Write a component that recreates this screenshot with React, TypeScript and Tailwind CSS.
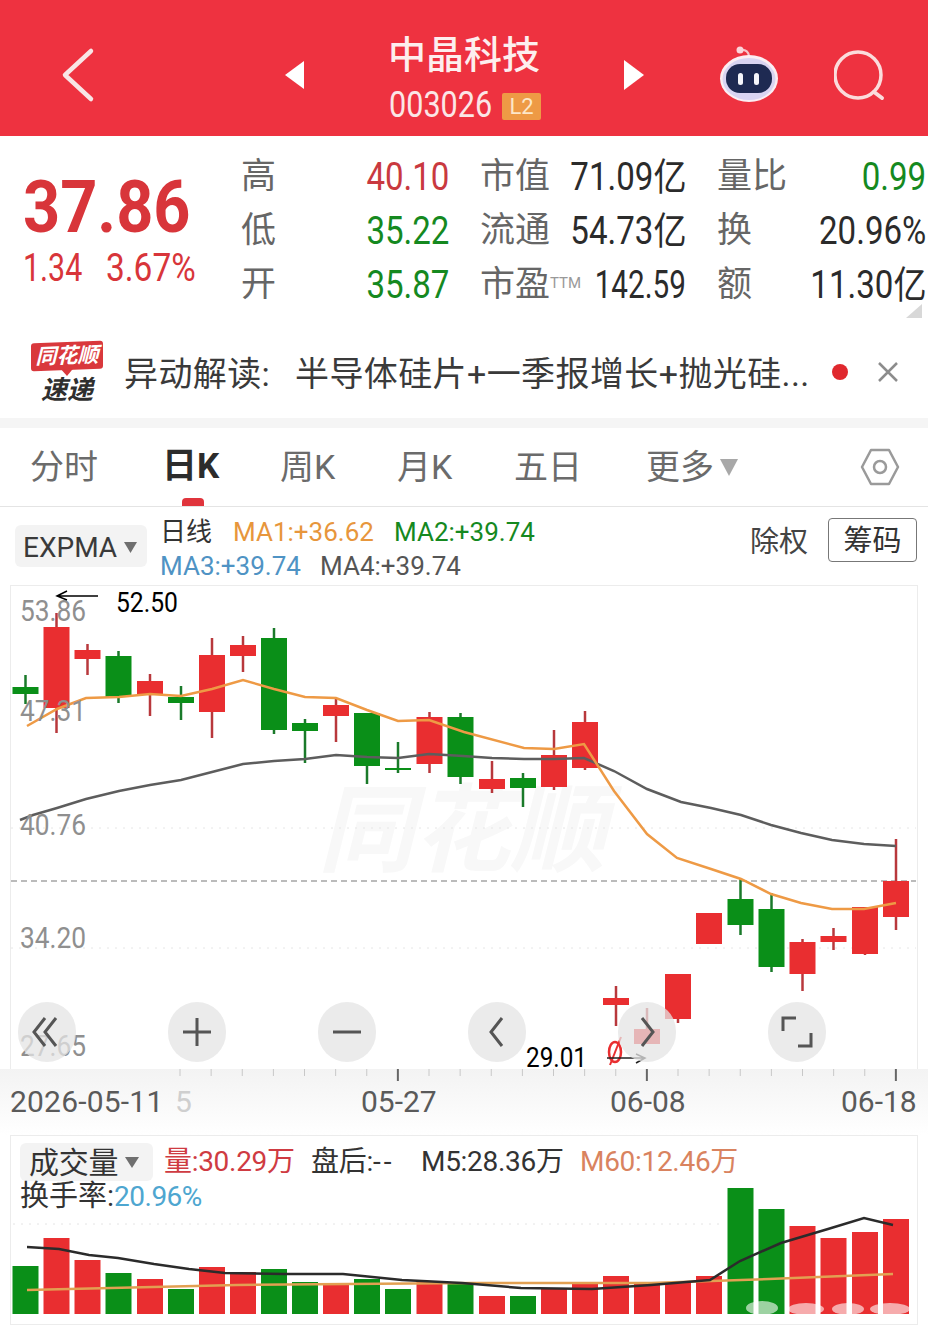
import React from 'react';

const GREEN = '#0a8f18';
const RED = '#e92e30';

// x, bodyTop, bodyBottom, wickTop, wickBottom, up
type Candle = [number, number, number, number, number, boolean];

const candles: Candle[] = [
  [25.5, 686, 693, 674, 703, false],
  [56.5, 626, 707, 612, 732, true],
  [87.5, 649, 658, 643, 674, true],
  [118.5, 655, 696, 650, 702, false],
  [150, 680, 694, 673, 715, true],
  [181, 696, 702, 685, 719, false],
  [212, 654, 711, 637, 737, true],
  [243, 644, 655, 635, 671, true],
  [274, 637, 729, 627, 733, false],
  [305, 722, 730, 718, 762, false],
  [336, 704, 715, 698, 741, true],
  [367, 712, 765, 712, 783, false],
  [398, 767, 769, 741, 772, false],
  [429.5, 716, 763, 711, 772, true],
  [460.5, 716, 776, 712, 783, false],
  [492, 778, 788, 760, 792, true],
  [523, 777, 787, 772, 806, false],
  [554, 754, 786, 729, 789, true],
  [585, 721, 767, 710, 769, true],
  [616, 997, 1004, 985, 1025, true],
  [678, 973, 1018, 973, 1022, true],
  [709, 912, 943, 912, 943, true],
  [740.5, 898, 924, 878, 934, false],
  [771.5, 908, 966, 892, 971, false],
  [802.5, 941, 973, 938, 990, true],
  [833.5, 935, 941, 927, 949, true],
  [865, 906, 953, 906, 954, true],
  [896, 880, 916, 838, 929, true],
];

const orangeLine =
  '27,725 57,708 86,697 119,696 150,693 181,695 212,688 243,679 274,688 305,696 336,697 367,709 398,720 429,719 464,731 524,747 554,748 584,743 614,790 647,833 677,857 711,868 741,878 771,893 801,902 832,908 864,908 896,902';
const grayLine =
  '20,819 33,814 57,807 86,798 119,790 150,784 181,779 212,771 243,763 274,760 305,758 336,754 367,756 398,757 429,753 463,755 492,757 524,758 554,758 584,757 614,770 647,788 681,801 711,807 741,814 771,824 801,832 832,839 864,843 896,845';

// x, top, up
const volumes: [number, number, boolean][] = [
  [25.5, 1265, false],
  [56.5, 1237, true],
  [87.5, 1259, true],
  [118.5, 1272, false],
  [150, 1278, true],
  [181, 1288, false],
  [212, 1266, true],
  [243, 1271, true],
  [274, 1268, false],
  [305, 1281, false],
  [336, 1282, true],
  [367, 1278, false],
  [398, 1288, false],
  [429.5, 1281, true],
  [460.5, 1282, false],
  [492, 1295, true],
  [523, 1295, false],
  [554, 1288, true],
  [585, 1282, true],
  [616, 1275, true],
  [647, 1281, true],
  [678, 1281, true],
  [709, 1275, true],
  [740.5, 1187, false],
  [771.5, 1208, false],
  [802.5, 1225, true],
  [833.5, 1237, true],
  [865, 1231, true],
  [896, 1218, true],
];

const quoteRows = [
  [
    { label: '高', value: '40.10', color: 'text-[#c9393f]' },
    { label: '市值', value: '71.09亿', color: 'text-[#2b2b2b]' },
    { label: '量比', value: '0.99', color: 'text-[#15891f]' },
  ],
  [
    { label: '低', value: '35.22', color: 'text-[#15891f]' },
    { label: '流通', value: '54.73亿', color: 'text-[#2b2b2b]' },
    { label: '换', value: '20.96%', color: 'text-[#2b2b2b]' },
  ],
  [
    { label: '开', value: '35.87', color: 'text-[#15891f]' },
    { label: '市盈', sup: 'TTM', value: '142.59', color: 'text-[#2b2b2b]' },
    { label: '额', value: '11.30亿', color: 'text-[#2b2b2b]' },
  ],
];

const ticks = Array.from({ length: 24 }, (_, i) => i);

const RobotIcon = () => (
  <svg width="62" height="60" viewBox="0 0 62 60">
    <path d="M22 5q8-1 9 6" fill="none" stroke="#f8c4ca" strokeWidth="2" />
    <circle cx="22" cy="5" r="3.500" fill="#fbd5da" />
    <ellipse cx="31" cy="33.500" rx="29" ry="23.500" fill="#fbeef3" />
    <ellipse cx="31" cy="34" rx="26.500" ry="21" fill="#d9d4f2" />
    <rect x="8" y="19" width="46" height="29" rx="14" fill="#1e2a52" />
    <rect x="20" y="28" width="5" height="12" rx="2.500" fill="#f6f6fb" />
    <rect x="36" y="28" width="5" height="12" rx="2.500" fill="#f6f6fb" />
  </svg>
);

const TongLogo = () => (
  <div className="mt-[6px] flex w-[74px] flex-col items-center">
    <div className="relative flex h-[28px] w-[72px] -skew-y-2 items-center justify-center rounded-[3px] bg-[#d9383c] text-[21px] font-bold italic leading-none text-white">
      同花顺
      <div className="absolute -bottom-[6px] left-[30px] h-0 w-0 border-x-[6px] border-t-[7px] border-x-transparent border-t-[#d9383c]" />
    </div>
    <div className="mt-[7px] text-[26px] font-bold italic leading-none text-[#2f2f2f]">速递</div>
  </div>
);

const Tab = ({ label, active, width }: { label: string; active?: boolean; width: string }) => (
  <div className={`relative flex h-full items-center ${width}`}>
    <span className={active ? 'text-[35px] font-bold text-[#2c2c2c]' : 'text-[34px] text-[#6b6b6b]'}>{label}</span>
    {active && <div className="absolute bottom-0 left-[20px] h-[8px] w-[22px] rounded-t-[4px] bg-[#e0343c]" />}
  </div>
);

const RoundButton = ({ d }: { d: string }) => (
  <div className="flex h-[60px] w-[58px] items-center justify-center rounded-full bg-[#e4e4e4]/75">
    <svg width="34" height="34" viewBox="0 0 34 34">
      <path d={d} fill="none" stroke="#555" strokeWidth="3" />
    </svg>
  </div>
);

const KChart = () => (
  <svg className="block" width="928" height="483" viewBox="0 585 928 483">
    <text x="318" y="863" fontSize="96" fontWeight="700" fontStyle="italic" fill="#f8f8f8">
      同花顺
    </text>
    <line x1="11" y1="827" x2="916" y2="827" stroke="#e6e6e6" strokeDasharray="2 6" />
    <line x1="11" y1="947" x2="916" y2="947" stroke="#e6e6e6" strokeDasharray="2 6" />
    <line x1="11" y1="880" x2="916" y2="880" stroke="#a5a5a5" strokeWidth="1.5" strokeDasharray="6 4" />
    {candles.map(([x, top, bottom, wickTop, wickBottom, up]) => (
      <g key={x} fill={up ? RED : GREEN} stroke={up ? '#b8383c' : '#1a7a2a'}>
        <line x1={x} y1={wickTop} x2={x} y2={wickBottom} strokeWidth="2.500" />
        <rect x={x - 13} y={top} width="26" height={bottom - top} stroke="none" />
      </g>
    ))}
    <rect x="634" y="1028" width="26" height="15" fill={RED} />
    <line x1="647" y1="1007" x2="647" y2="1028" stroke="#b8383c" strokeWidth="2.500" />
    <ellipse cx="615" cy="1051" rx="6" ry="10" fill="none" stroke={RED} strokeWidth="2.500" />
    <line x1="621" y1="1036" x2="610" y2="1064" stroke={RED} strokeWidth="2" />
    <polyline points={grayLine} fill="none" stroke="#5d5d5d" strokeWidth="2.500" />
    <polyline points={orangeLine} fill="none" stroke="#ee9a45" strokeWidth="2.500" />
    <g fontSize="29" fill="#8f8f8f">
      <text x="20" y="620" textLength="66" lengthAdjust="spacingAndGlyphs">53.86</text>
      <text x="20" y="720" textLength="66" lengthAdjust="spacingAndGlyphs">47.31</text>
      <text x="20" y="834" textLength="66" lengthAdjust="spacingAndGlyphs">40.76</text>
      <text x="20" y="947" textLength="66" lengthAdjust="spacingAndGlyphs">34.20</text>
      <text x="20" y="1055" textLength="66" lengthAdjust="spacingAndGlyphs">27.65</text>
    </g>
    <g fontSize="27" fill="#000">
      <text x="116" y="611" textLength="62" lengthAdjust="spacingAndGlyphs">52.50</text>
      <text x="526" y="1066" textLength="61" lengthAdjust="spacingAndGlyphs">29.01</text>
    </g>
    <path d="M98 595H57M67 590l-10 5 10 4" fill="none" stroke="#000" strokeWidth="1.500" />
    <path d="M607 1057h38M636 1053l9 4-9 5" fill="none" stroke="#222" strokeWidth="1.500" />
  </svg>
);

const VolumeChart = () => (
  <svg className="block" width="928" height="190" viewBox="0 1135 928 190">
    <line x1="13" y1="1223" x2="720" y2="1223" stroke="#e4e4e4" strokeDasharray="2 6" />
    {volumes.map(([x, top, up]) => (
      <rect key={x} x={x - 13} y={top} width="26" height={1313 - top} fill={up ? RED : GREEN} />
    ))}
    <polyline
      points="27,1289 237,1284 473,1282 651,1282 769,1278 893,1273"
      fill="none"
      stroke="#e2a052"
      strokeWidth="2.500"
    />
    <polyline
      points="27,1246 59,1248 89,1254 118,1257 154,1263 189,1268 225,1272 284,1273 343,1273 402,1279 462,1282 521,1287 592,1288 651,1284 710,1279 740,1260 781,1242 828,1228 864,1217 893,1224"
      fill="none"
      stroke="#2b2b2b"
      strokeWidth="2.500"
    />
    <g fill="#fff" opacity="0.6">
      <ellipse cx="762" cy="1307" rx="16" ry="7" />
      <ellipse cx="806" cy="1308" rx="18" ry="6" />
      <ellipse cx="848" cy="1308" rx="16" ry="6" />
      <ellipse cx="890" cy="1308" rx="20" ry="6" />
    </g>
  </svg>
);

export default function App() {
  return (
    <div className="h-[1331px] w-[928px] overflow-hidden bg-white [font-family:Roboto,'Noto_Sans_CJK_SC',sans-serif]">
      {/* top bar */}
      <header className="flex h-[136px] items-center bg-[#ee3240] pt-[14px] text-white">
        <div className="flex w-[285px] items-center pl-[58px]">
          <svg width="40" height="56" viewBox="0 0 40 56">
            <path d="M33 4 7 28l26 24" fill="none" stroke="#f8e6e6" strokeWidth="4.500" strokeLinecap="round" strokeLinejoin="round" />
          </svg>
        </div>
        <svg width="19" height="28" viewBox="0 0 19 28">
          <path d="M19 0v28L0 14z" fill="#fff" />
        </svg>
        <div className="ml-[85px] flex w-[152px] flex-col pt-[6px]">
          <div className="-ml-[1px] whitespace-nowrap text-[38px] font-medium leading-[46px] text-[#fdeeee]">中晶科技</div>
          <div className="mt-[10px] flex items-center">
            <span className="w-[113px]">
              <span className="inline-block origin-left scale-x-[.85] text-[36px] leading-[34px] text-[#fbe6e6]">003026</span>
            </span>
            <span className="flex h-[27px] w-[39px] items-center justify-center rounded-[2px] bg-[#ee9a45] text-[22px] text-[#fde7c8]">
              L2
            </span>
          </div>
        </div>
        <svg className="ml-[83px]" width="20" height="30" viewBox="0 0 20 30">
          <path d="M0 0v30l20-15z" fill="#fff" />
        </svg>
        <div className="ml-[74px]">
          <RobotIcon />
        </div>
        <svg className="ml-[54px]" width="54" height="54" viewBox="0 0 54 54">
          <circle cx="24" cy="27" r="23" fill="none" stroke="#fbdcdc" strokeWidth="3.500" />
          <path d="M40 44l8 6" stroke="#fbdcdc" strokeWidth="4" strokeLinecap="round" />
        </svg>
      </header>

      {/* quote */}
      <section className="relative flex h-[184px] pt-[14px]">
        <div className="w-[241px] pl-[23px] pt-[20px] text-[#d8353a]">
          <div className="origin-left scale-x-[.9] whitespace-nowrap text-[72px] font-bold leading-[76px]">37.86</div>
          <div className="flex text-[38px] leading-[44px]">
            <span className="w-[83px] shrink-0">
              <span className="inline-block origin-left scale-x-[.8]">1.34</span>
            </span>
            <span className="inline-block origin-left scale-x-[.88]">3.67%</span>
          </div>
        </div>
        <div className="grid h-[162px] w-[687px] grid-cols-[208px_206px_209px] gap-x-[31px]">
          {quoteRows.flat().map((cell) => (
            <div key={cell.label} className="flex h-[54px] items-center justify-between whitespace-nowrap">
              <span className="text-[35px] text-[#666]">
                {cell.label}
                {cell.sup && <span className="relative -top-[8px] text-[15px] text-[#999]">{cell.sup}</span>}
              </span>
              <span className={`inline-block origin-right text-[38px] ${cell.sup ? '-ml-[40px] scale-x-[.78]' : 'scale-x-[.87]'} ${cell.color}`}>
                {cell.value}
              </span>
            </div>
          ))}
        </div>
        <svg className="absolute bottom-[2px] right-[6px]" width="16" height="14" viewBox="0 0 16 14">
          <path d="M16 0v14H0z" fill="#d8d8d8" />
        </svg>
      </section>

      {/* news strip */}
      <section className="flex h-[98px] items-center pl-[30px]">
        <TongLogo />
        <div className="ml-[20px] flex w-[690px] whitespace-nowrap pt-[10px] text-[34px] tracking-[0.4px] text-[#3a3a3a]">
          <span className="w-[171px]">异动解读:</span>
          <span>半导体硅片+一季报增长+抛光硅...</span>
        </div>
        <div className="ml-[18px] mt-[6px] h-[16px] w-[16px] rounded-full bg-[#e0282e]" />
        <svg className="ml-[29px] mt-[6px]" width="22" height="22" viewBox="0 0 22 22">
          <path d="M2 2l18 18M20 2 2 20" stroke="#8c8c8c" strokeWidth="2.500" />
        </svg>
      </section>
      <div className="h-[10px] bg-[#f5f5f5]" />

      {/* period tabs */}
      <nav className="flex h-[79px] items-center border-b border-[#e4e4e4] pl-[30px]">
        <Tab label="分时" width="w-[132px]" />
        <Tab label="日K" active width="w-[118px]" />
        <Tab label="周K" width="w-[117px]" />
        <Tab label="月K" width="w-[117px]" />
        <Tab label="五日" width="w-[132px]" />
        <Tab label="更多" width="w-[74px]" />
        <svg width="18" height="17" viewBox="0 0 18 17">
          <path d="M0 0h18L9 17z" fill="#a8a8a8" />
        </svg>
        <svg className="ml-[122px]" width="40" height="40" viewBox="0 0 40 40">
          <path d="M11 3h18l9 17-9 17H11L2 20z" fill="none" stroke="#9a9a9a" strokeWidth="2.500" strokeLinejoin="round" />
          <circle cx="20" cy="20" r="6" fill="none" stroke="#9a9a9a" strokeWidth="2.500" />
        </svg>
      </nav>

      {/* indicator row */}
      <section className="flex h-[78px] items-center pl-[15px]">
        <div className="flex h-[42px] w-[132px] items-center rounded-[6px] bg-[#f3f3f3] pl-[8px] pt-[3px] text-[28px] text-[#3a3a3a]">
          EXPMA
          <svg className="ml-[7px]" width="13" height="11" viewBox="0 0 13 11">
            <path d="M0 0h13L6.500 11z" fill="#6f6f6f" />
          </svg>
        </div>
        <div className="ml-[13px] flex h-full w-[590px] flex-col justify-center pt-[5px] text-[26px] leading-[34px]">
          <div className="flex">
            <span className="w-[73px] text-[#333]">日线</span>
            <span className="w-[161px] text-[#e7963c]">MA1:+36.62</span>
            <span className="text-[#15891f]">MA2:+39.74</span>
          </div>
          <div className="flex">
            <span className="w-[160px] text-[#4f93c4]">MA3:+39.74</span>
            <span className="text-[#555]">MA4:+39.74</span>
          </div>
        </div>
        <span className="-mt-[7px] w-[78px] text-[29px] text-[#444]">除权</span>
        <div className="-mt-[12px] flex h-[44px] w-[89px] items-center justify-center rounded-[4px] border border-[#777] pt-[4px] text-[29px] text-[#333]">
          筹码
        </div>
      </section>

      {/* k-line */}
      <section className="relative mx-[10px] w-[908px] border-x border-t border-[#ececec]">
        <div className="-ml-[11px]">
          <KChart />
        </div>
        <div className="absolute left-[7px] top-[416px] flex w-[808px] justify-between">
          <RoundButton d="M15 3 4 17l11 14M26 3 15 17l11 14" />
          <RoundButton d="M3 17h28M17 3v28" />
          <RoundButton d="M3 17h28" />
          <RoundButton d="M22 3 11 17l11 14" />
          <RoundButton d="M12 3l11 14-11 14" />
          <RoundButton d="M3 16V3h13M31 18v13H18" />
        </div>
      </section>

      {/* time axis */}
      <section className="relative h-[66px] bg-gradient-to-b from-[#f3f3f3] to-white">
        <svg className="block" width="928" height="14" viewBox="0 0 928 14">
          {ticks.map((i) => {
            const x = 180 + i * 31.125;
            const major = i % 8 === 7;
            return <line key={i} x1={x} y1="0" x2={x} y2={major ? 12 : 7} stroke={major ? '#666' : '#c8c8c8'} strokeWidth={major ? 2 : 1} />;
          })}
        </svg>
        <div className="flex pl-[10px] pt-[1px] text-[30px] leading-[36px] text-[#5a5a5a]">
          <span className="w-[165px] tracking-[0.2px]">2026-05-11</span>
          <span className="w-[186px] text-[#cfcfcf]">5</span>
          <span className="w-[249px]">05-27</span>
          <span className="w-[231px]">06-08</span>
          <span>06-18</span>
        </div>
      </section>

      {/* volume */}
      <section className="mx-[10px] grid h-[190px] w-[908px] border-x border-y border-[#ececec]">
        <div className="col-start-1 row-start-1 -ml-[11px]">
          <VolumeChart />
        </div>
        <div className="z-10 col-start-1 row-start-1 pl-[9px] pt-[7px]">
          <div className="flex h-[38px] items-center whitespace-nowrap text-[28px] tracking-[-0.3px]">
            <div className="flex h-[38px] w-[133px] items-center rounded-[6px] bg-[#f3f3f3] pl-[9px] text-[30px] text-[#333]">
              成交量
              <svg className="ml-[7px]" width="14" height="11" viewBox="0 0 14 11">
                <path d="M0 0h14L7 11z" fill="#6f6f6f" />
              </svg>
            </div>
            <span className="ml-[11px] w-[147px] text-[#cf3b42]">量:30.29万</span>
            <span className="w-[110px] text-[#333]">
              盘后:<span className="tracking-[3px]">--</span>
            </span>
            <span className="w-[159px] text-[#333]">M5:28.36万</span>
            <span className="text-[#d9835f]">M60:12.46万</span>
          </div>
          <div className="-mt-[2px] text-[29px] leading-[34px] text-[#333]">
            换手率:<span className="text-[28px] tracking-[-0.5px] text-[#4ea6d0]">20.96%</span>
          </div>
        </div>
      </section>
    </div>
  );
}
